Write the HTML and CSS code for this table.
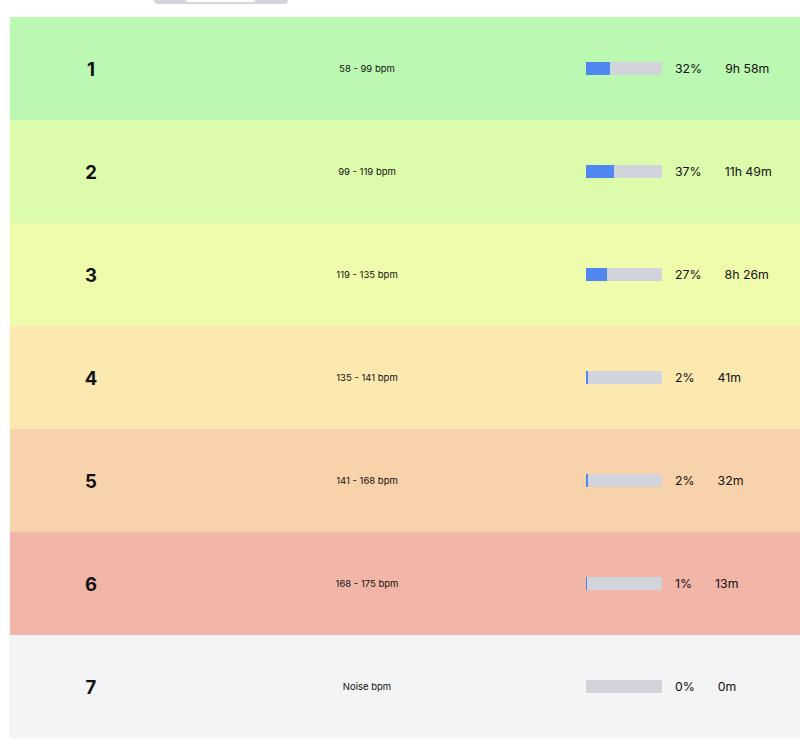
FILE: index.html
```html
<!DOCTYPE html>
<html>
<head>
<meta charset="utf-8">
<link rel="stylesheet" href="styles.css">
</head>
<body>
<div class="top">
  <div class="seg"><div class="seg-on"></div></div>
</div>
<div class="zones">
  <div class="zone z1">
    <div class="num">1</div><div class="range">58 - 99 bpm</div>
    <div class="stat"><div class="bar"><div class="fill" style="width:32%"></div></div><span class="pct">32%</span><span class="time">9h 58m</span></div>
  </div>
  <div class="zone z2">
    <div class="num">2</div><div class="range">99 - 119 bpm</div>
    <div class="stat"><div class="bar"><div class="fill" style="width:37%"></div></div><span class="pct">37%</span><span class="time">11h 49m</span></div>
  </div>
  <div class="zone z3">
    <div class="num">3</div><div class="range">119 - 135 bpm</div>
    <div class="stat"><div class="bar"><div class="fill" style="width:27%"></div></div><span class="pct">27%</span><span class="time">8h 26m</span></div>
  </div>
  <div class="zone z4">
    <div class="num">4</div><div class="range">135 - 141 bpm</div>
    <div class="stat"><div class="bar"><div class="fill" style="width:2%"></div></div><span class="pct">2%</span><span class="time">41m</span></div>
  </div>
  <div class="zone z5">
    <div class="num">5</div><div class="range">141 - 168 bpm</div>
    <div class="stat"><div class="bar"><div class="fill" style="width:2%"></div></div><span class="pct">2%</span><span class="time">32m</span></div>
  </div>
  <div class="zone z6">
    <div class="num">6</div><div class="range">168 - 175 bpm</div>
    <div class="stat"><div class="bar"><div class="fill" style="width:1%"></div></div><span class="pct">1%</span><span class="time">13m</span></div>
  </div>
  <div class="zone z7">
    <div class="num">7</div><div class="range">Noise bpm</div>
    <div class="stat"><div class="bar"><div class="fill" style="width:0%"></div></div><span class="pct">0%</span><span class="time">0m</span></div>
  </div>
</div>
</body>
</html>
```
FILE: styles.css
```css
html, body {
  margin: 0;
  padding: 0;
  background: #ffffff;
  font-family: Inter, "Liberation Sans", sans-serif;
  color: #111;
  overflow: hidden;
}
.top {
  height: 4px;
  padding-left: 154px;
}
.seg {
  width: 134px;
  height: 4px;
  background: #d4d5db;
  border-radius: 0 0 5px 5px;
  display: flex;
  justify-content: flex-start;
  padding-left: 32px;
  box-sizing: border-box;
}
.seg-on {
  width: 69px;
  height: 2px;
  background: #ffffff;
  border-radius: 0 0 3px 3px;
}
.zones {
  margin: 13px 0 0 10px;
  width: 800px;
  box-shadow: 0 1px 3px rgba(0,0,0,0.06);
}
.zone {
  display: grid;
  grid-template-columns: 162px 390px 1fr;
  align-items: center;
  height: 103px;
}
.z1 { background: #bbf9b3; }
.z2 { background: #dcfbab; }
.z3 { background: #effcab; }
.z4 { background: #fbe9b0; }
.z5 { background: #f7d2ab; }
.z6 { background: #f2b6a8; }
.z7 { background: #f3f4f6; }
.num {
  text-align: center;
  font-size: 18.5px;
  font-weight: 700;
}
.range {
  text-align: center;
  font-size: 9.5px;
}
.stat {
  display: flex;
  align-items: center;
  padding-left: 24px;
  font-size: 12.3px;
}
.bar {
  width: 76px;
  height: 13px;
  background: #d1d5db;
  display: flex;
}
.fill {
  background: #4f86f0;
  height: 100%;
}
.pct {
  margin-left: 13px;
}
.time {
  margin-left: 23px;
}
```
